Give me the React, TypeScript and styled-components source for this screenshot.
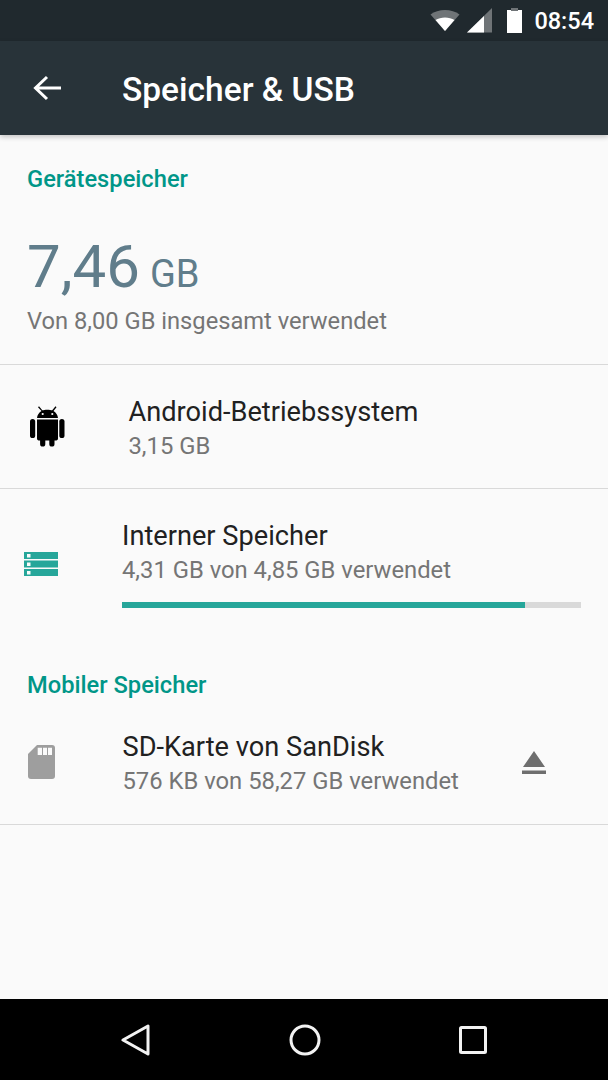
import React from "react";
import styled, { createGlobalStyle } from "styled-components";

const GlobalStyle = createGlobalStyle`
  html, body {
    margin: 0;
    padding: 0;
    background: #fafafa;
  }
  * {
    box-sizing: border-box;
  }
`;

const Screen = styled.div`
  width: 608px;
  height: 1080px;
  display: flex;
  flex-direction: column;
  overflow: hidden;
  background: #fafafa;
  font-family: Roboto, "Liberation Sans", sans-serif;
`;

const StatusBar = styled.div`
  height: 41px;
  flex: none;
  display: flex;
  align-items: center;
  justify-content: flex-end;
  padding-right: 14px;
  background: #20292e;
  color: #fff;
`;

const StatusTime = styled.span`
  margin-left: 11px;
  font-size: 23.5px;
  font-weight: 500;
`;

const StatusIcon = styled.svg<{ $gap?: number }>`
  display: block;
  margin-left: ${p => p.$gap ?? 0}px;
`;

const AppBar = styled.div`
  position: relative;
  height: 94px;
  flex: none;
  display: flex;
  align-items: center;
  padding-left: 33px;
  background: #283339;
  box-shadow: 0 2px 5px rgba(0, 0, 0, 0.22);
`;

const Title = styled.div`
  margin: 2px 0 0 60px;
  font-size: 33.5px;
  font-weight: 500;
  color: #fff;
`;

const Content = styled.div`
  flex: 1;
  display: flex;
  flex-direction: column;
`;

const SectionTitle = styled.div<{ $top: number; $height: number }>`
  height: ${p => p.$height}px;
  padding: ${p => p.$top}px 0 0 27px;
  font-size: 23.7px;
  line-height: 30px;
  font-weight: 500;
  color: #009688;
`;

const Summary = styled.div`
  height: 130px;
  padding-left: 27px;
  border-bottom: 1px solid #d9d9d9;
`;

const UsedValue = styled.div`
  height: 62px;
  display: flex;
  align-items: baseline;
  line-height: 64px;
  color: #607d8b;
`;

const Big = styled.span`
  font-size: 60px;
`;

const Unit = styled.span`
  margin-left: 10px;
  font-size: 38px;
`;

const SummaryNote = styled.div`
  margin-top: 9px;
  font-size: 23.7px;
  line-height: 30px;
  color: #757575;
`;

const Row = styled.div<{ $height: number; $divider?: boolean; $textLeft: number }>`
  height: ${p => p.$height}px;
  display: flex;
  align-items: flex-start;
  padding-left: ${p => p.$textLeft}px;
  border-bottom: ${p => (p.$divider ? "1px solid #d9d9d9" : "none")};
`;

const RowIcon = styled.svg<{ $top: number }>`
  display: block;
  flex: none;
  margin-top: ${p => p.$top}px;
`;

const RowBody = styled.div<{ $top: number; $left: number; $width?: number }>`
  padding-top: ${p => p.$top}px;
  margin-left: ${p => p.$left}px;
  width: ${p => (p.$width ? `${p.$width}px` : "auto")};
`;

const RowTitle = styled.div`
  font-size: 27.2px;
  line-height: 34px;
  color: #212121;
`;

const RowSub = styled.div`
  font-size: 23.8px;
  line-height: 34px;
  color: #757575;
`;

const Track = styled.div`
  height: 6px;
  margin-top: 15px;
  background: #d9d9d9;
`;

const Fill = styled.div`
  height: 100%;
  background: #26a69a;
`;

const EjectButton = styled.svg`
  display: block;
  flex: none;
  margin: 26px 62px 0 auto;
`;

const NavBar = styled.div`
  height: 81px;
  flex: none;
  display: flex;
  align-items: center;
  justify-content: space-between;
  padding: 0 121px 0 121px;
  background: #000;
`;

const App = () => {
  const used = 87.9;

  return (
    <Screen>
      <GlobalStyle />
      <StatusBar>
        <StatusIcon width="30" height="24" viewBox="0 0 30 24">
          <path d="M15 22 L0.5 5.5 C8 -0.5 22 -0.5 29.5 5.5 Z" fill="#6f7477" />
          <path d="M15 22 L5.5 11 C10.5 7.5 19.5 7.5 24.5 11 Z" fill="#fff" />
        </StatusIcon>
        <StatusIcon $gap={7} width="26" height="26" viewBox="0 0 26 26">
          <path d="M0 24.500 L25 0 V24.500 Z" fill="#6f7477" />
          <path d="M0 24.500 L17 8 V24.500 Z" fill="#fff" />
        </StatusIcon>
        <StatusIcon $gap={13} width="17" height="26" viewBox="0 0 17 26">
          <path d="M5 0 H12 V2 H16 V25 H1 V2 H5 Z" fill="#fff" />
          <path d="M5 0 H12 V3 H5 Z" fill="#6f7477" />
        </StatusIcon>
        <StatusTime>08:54</StatusTime>
      </StatusBar>

      <AppBar>
        <svg width="29" height="26" viewBox="0 0 29 26" fill="none" stroke="#fff" strokeWidth="3">
          <path d="M28 13 H3 M14 2 L2.5 13 L14 24" />
        </svg>
        <Title>Speicher &amp; USB</Title>
      </AppBar>

      <Content>
        <SectionTitle $top={29} $height={100}>Gerätespeicher</SectionTitle>
        <Summary>
          <UsedValue>
            <Big>7,46</Big>
            <Unit>GB</Unit>
          </UsedValue>
          <SummaryNote>Von 8,00 GB insgesamt verwendet</SummaryNote>
        </Summary>

        <Row $height={124} $textLeft={30} $divider>
          <RowIcon $top={41} width="35" height="41" viewBox="0 0 35 41">
            <path
              fill="#000"
              d="M9 0.3 L12.300 4.300 C14.500 3.400 20 3.400 22.200 4.300 L25.500 0.300 L26.500 1.200 L23.500 5 C26 6.500 27.700 9 28 12 H7 C7.300 9 9 6.500 11.500 5 L8 1.200 Z"
            />
            <rect x="0" y="13" width="5.200" height="19" rx="2.600" fill="#000" />
            <rect x="29.300" y="13" width="5.200" height="19" rx="2.600" fill="#000" />
            <path
              fill="#000"
              d="M7 13.500 H28 V32.500 C28 34 27 34.500 25.500 34.500 H24.500 V38 A2.600 2.600 0 0 1 19.300 38 V34.500 H15.300 V38 A2.600 2.600 0 0 1 10.100 38 V34.500 H9.500 C8 34.500 7 34 7 32.500 Z"
            />
            <circle cx="12.700" cy="8" r="1.100" fill="#fafafa" />
            <circle cx="22.300" cy="8" r="1.100" fill="#fafafa" />
          </RowIcon>
          <RowBody $top={30} $left={63.5}>
            <RowTitle>Android-Betriebssystem</RowTitle>
            <RowSub>3,15 GB</RowSub>
          </RowBody>
        </Row>

        <Row $height={136} $textLeft={24}>
          <RowIcon $top={63} width="34" height="24" viewBox="0 0 34 24">
            <path fill="#26a69a" d="M0 0 H34 V7 H0 Z M0 8.500 H34 V15.500 H0 Z M0 17 H34 V24 H0 Z" />
            <path fill="#fafafa" d="M3 2 H6.500 V5.500 H3 Z M3 10.500 H6.500 V14 H3 Z M3 19 H6.500 V22.500 H3 Z" />
          </RowIcon>
          <RowBody $top={30} $left={64} $width={459}>
            <RowTitle>Interner Speicher</RowTitle>
            <RowSub>4,31 GB von 4,85 GB verwendet</RowSub>
            <Track>
              <Fill style={{ width: `${used}%` }} />
            </Track>
          </RowBody>
        </Row>

        <SectionTitle $top={45} $height={100}>Mobiler Speicher</SectionTitle>

        <Row $height={100} $textLeft={28} $divider>
          <RowIcon $top={20} width="27" height="34" viewBox="0 0 27 34">
            <path
              fill="#9e9e9e"
              d="M9 0 H24 A3 3 0 0 1 27 3 V31 A3 3 0 0 1 24 34 H3 A3 3 0 0 1 0 31 V9 Z"
            />
            <path fill="#fafafa" d="M9.700 2.700 H14 V10 H9.700 Z M15 2.700 H19 V10 H15 Z M20 2.700 H24 V10 H20 Z" />
          </RowIcon>
          <RowBody $top={5} $left={67.5}>
            <RowTitle>SD-Karte von SanDisk</RowTitle>
            <RowSub>576 KB von 58,27 GB verwendet</RowSub>
          </RowBody>
          <EjectButton width="24" height="23" viewBox="0 0 24 23">
            <path fill="#6e6e6e" d="M12 0 L23 16 H1 Z M0 19.500 H24 V23 H0 Z" />
          </EjectButton>
        </Row>
      </Content>

      <NavBar>
        <svg width="29" height="32" viewBox="0 0 29 32" fill="none" stroke="#f2f2f2" strokeWidth="3" strokeLinejoin="round">
          <path d="M27 2 V30 L2 16 Z" />
        </svg>
        <svg width="32" height="32" viewBox="0 0 32 32" fill="none" stroke="#f2f2f2" strokeWidth="3">
          <circle cx="16" cy="16" r="14" />
        </svg>
        <svg width="28" height="28" viewBox="0 0 28 28" fill="none" stroke="#f2f2f2" strokeWidth="3" strokeLinejoin="round">
          <rect x="1.500" y="1.500" width="25" height="25" rx="1" />
        </svg>
      </NavBar>
    </Screen>
  );
};

export default App;
